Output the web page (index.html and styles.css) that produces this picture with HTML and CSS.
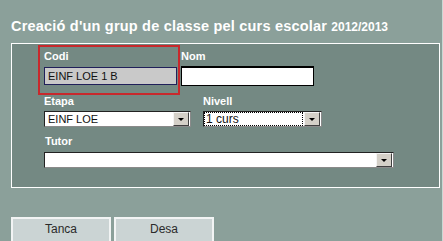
FILE: index.html
```html
<!DOCTYPE html>
<html lang="ca">
<head>
  <meta charset="UTF-8" />
  <title>Creació d'un grup de classe</title>
  <link rel="stylesheet" href="styles.css">
</head>
<body>
  <h1 class="title">Creació d'un grup de classe pel curs escolar <span class="year">2012/2013</span></h1>

  <div class="panel">
    <div class="row first">
      <div class="codi-box">
        <label class="lbl">Codi</label>
        <div class="field codi">EINF LOE 1 B</div>
      </div>
      <div class="col nom-col">
        <label class="lbl">Nom</label>
        <div class="field nom"></div>
      </div>
    </div>

    <div class="row">
      <div class="col">
        <label class="lbl">Etapa</label>
        <div class="combo etapa">
          <span class="combo-text">EINF LOE</span>
          <span class="arrow"></span>
        </div>
      </div>
      <div class="col">
        <label class="lbl">Nivell</label>
        <div class="combo nivell">
          <span class="combo-text focus">1 curs</span>
          <span class="arrow"></span>
        </div>
      </div>
    </div>

    <div class="row tutor-row">
      <div class="col">
        <label class="lbl">Tutor</label>
        <div class="combo tutor">
          <span class="combo-text"></span>
          <span class="arrow"></span>
        </div>
      </div>
    </div>
  </div>

  <div class="buttons">
    <button class="btn">Tanca</button>
    <button class="btn">Desa</button>
  </div>
</body>
</html>
```

FILE: styles.css
```css
html, body {
  margin: 0;
  height: 100%;
  overflow: hidden;
}
body {
  font-family: "Liberation Sans", Arial, sans-serif;
  background: #8ba09a;
  padding: 0 3px 0 11px;
  box-sizing: border-box;
  border-right: 1px solid #c9d8d4;
}
.title {
  margin: 0;
  padding-top: 18px;
  height: 25px;
  font-size: 14.5px;
  letter-spacing: 0.2px;
  line-height: 16px;
  font-weight: bold;
  color: #fff;
  white-space: nowrap;
}
.title .year {
  font-size: 12px;
  letter-spacing: 0;
}
.panel {
  width: 429px;
  height: 145px;
  border: 1px solid #fff;
  background: #748983;
  padding-left: 26px;
  box-sizing: border-box;
}
.row {
  display: flex;
  gap: 12px;
  padding-left: 6px;
}
.row.first {
  gap: 1px;
  padding-left: 0;
  margin-top: 1px;
  height: 50px;
}
.lbl {
  display: block;
  color: #fff;
  font-size: 11px;
  font-weight: bold;
  line-height: 13px;
}
.codi-box {
  width: 134px;
  height: 43px;
  border: 2px solid #c8282c;
  padding: 3px 0 0 4px;
  box-sizing: content-box;
}
.codi-box .lbl {
  margin-bottom: 4px;
}
.nom-col {
  padding-top: 5px;
}
.nom-col .lbl {
  margin-bottom: 4px;
}
.field {
  box-sizing: border-box;
  font-size: 11px;
  line-height: 16px;
  padding-left: 3px;
  color: #111;
}
.codi {
  width: 133px;
  height: 18px;
  background: #c9c9c9;
  border: 1px solid #20205a;
}
.nom {
  width: 133px;
  height: 20px;
  background: #fff;
  border: 1px solid #000;
  border-top-width: 2px;
}
.row .col .lbl {
  margin-bottom: 3px;
}
.tutor-row {
  margin-top: 8px;
}
.tutor-row .col .lbl {
  margin-bottom: 4px;
  padding-left: 1px;
}
.combo {
  display: flex;
  align-items: center;
  box-sizing: border-box;
  height: 16px;
  background: #fff;
  border-top: 1px solid #222;
  border-left: 1px solid #222;
  border-right: 1px solid #8a8a8a;
  border-bottom: 1px solid #8a8a8a;
  padding-right: 1px;
}
.combo-text {
  flex: 1;
  font-size: 11px;
  line-height: 13px;
  padding-left: 3px;
  color: #111;
  overflow: hidden;
  white-space: nowrap;
}
.combo-text.focus {
  font-size: 12px;
  margin: 0 2px 0 1px;
  padding-left: 1px;
  outline: 1px dotted #000;
  height: 12px;
  line-height: 12px;
}
.arrow {
  position: relative;
  width: 14px;
  height: 12px;
  background: #d4d0c8;
  border-top: 1px solid #f4f4f4;
  border-left: 1px solid #f4f4f4;
  border-right: 1px solid #404040;
  border-bottom: 1px solid #404040;
}
.arrow::after {
  content: "";
  position: absolute;
  left: 4px;
  top: 5px;
  border-left: 3px solid transparent;
  border-right: 3px solid transparent;
  border-top: 3px solid #000;
}
.etapa {
  width: 147px;
}
.nivell {
  width: 119px;
}
.tutor {
  width: 350px;
}
.buttons {
  display: flex;
  gap: 3px;
  margin-top: 29px;
}
.btn {
  width: 100px;
  height: 26px;
  background: #cbd4d4;
  border: 2px solid #f2f4f4;
  font-family: "Liberation Sans", Arial, sans-serif;
  font-size: 12px;
  color: #2a2a2a;
  padding: 0 0 2px;
}
```
